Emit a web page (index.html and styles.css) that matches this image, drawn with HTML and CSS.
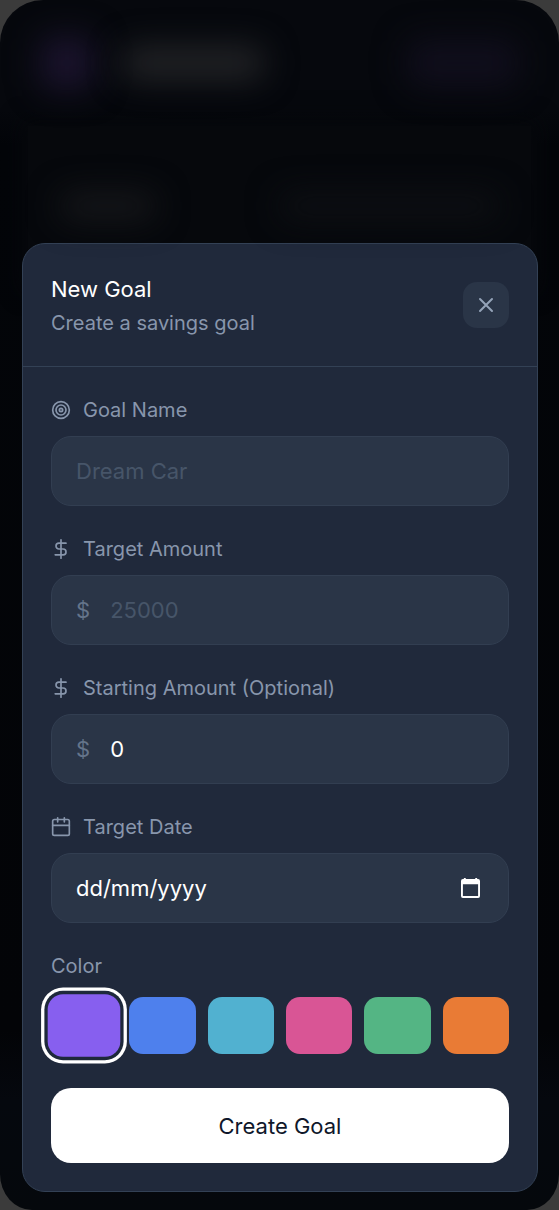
FILE: index.html
```html
<!DOCTYPE html>
<html lang="en-GB">
<head>
  <meta charset="utf-8">
  <meta name="viewport" content="width=device-width, initial-scale=1">
  <title>New Goal</title>
  <link rel="stylesheet" href="styles.css">
</head>
<body>
  <div class="screen">
    <div class="backdrop" aria-hidden="true">
      <div class="backdrop-header">
        <div class="glow glow-logo"></div>
        <div class="glow glow-brand"></div>
        <div class="glow glow-action"></div>
      </div>
      <div class="backdrop-panel">
        <div class="glow glow-heading"></div>
        <div class="glow glow-detail"></div>
      </div>
    </div>

    <main class="overlay">
      <form class="card" role="dialog" aria-labelledby="dialog-title">
        <header class="card-header">
          <div class="heading">
            <h1 class="title" id="dialog-title">New Goal</h1>
            <p class="subtitle">Create a savings goal</p>
          </div>
          <button class="close" type="button" aria-label="Close">
            <svg class="close-icon" viewBox="0 0 24 24"><path d="M18 6 6 18M6 6l12 12"/></svg>
          </button>
        </header>

        <div class="card-body">
          <div class="field">
            <label class="label" for="name">
              <svg class="icon" viewBox="0 0 24 24"><circle cx="12" cy="12" r="10"/><circle cx="12" cy="12" r="6"/><circle cx="12" cy="12" r="2"/></svg>
              Goal Name
            </label>
            <div class="control"><input class="input" id="name" type="text" placeholder="Dream Car"></div>
          </div>

          <div class="field">
            <label class="label" for="target">
              <svg class="icon" viewBox="0 0 24 24"><path d="M12 1v22M18 5H9.500a3.500 3.500 0 0 0 0 7h5a3.500 3.500 0 0 1 0 7H5"/></svg>
              Target Amount
            </label>
            <div class="control"><span class="currency">$</span><input class="input" id="target" type="text" inputmode="decimal" placeholder="25000"></div>
          </div>

          <div class="field">
            <label class="label" for="starting">
              <svg class="icon" viewBox="0 0 24 24"><path d="M12 1v22M18 5H9.500a3.500 3.500 0 0 0 0 7h5a3.500 3.500 0 0 1 0 7H5"/></svg>
              Starting Amount (Optional)
            </label>
            <div class="control"><span class="currency">$</span><input class="input" id="starting" type="text" inputmode="decimal" value="0"></div>
          </div>

          <div class="field">
            <label class="label" for="date">
              <svg class="icon" viewBox="0 0 24 24"><path d="M8 1v5M16 1v5M2 10h20"/><rect x="2" y="3" width="20" height="19" rx="2"/></svg>
              Target Date
            </label>
            <div class="control control-date">
              <input class="input input-date" id="date" type="text" placeholder="dd/mm/yyyy">
              <button class="picker" type="button" aria-label="Open calendar">
                <svg class="picker-icon" viewBox="0 0 20 22"><path fill-rule="evenodd" d="M3 0h2v1h10V0h2v1h1a2 2 0 0 1 2 2v16a2 2 0 0 1-2 2H2a2 2 0 0 1-2-2V3a2 2 0 0 1 2-2h1ZM2 6.500v12.500h16V6.500Z"/></svg>
              </button>
            </div>
          </div>

          <fieldset class="field colors">
            <legend class="label">Color</legend>
            <div class="swatches">
              <input class="swatch violet" type="radio" name="color" aria-label="Violet" checked>
              <input class="swatch blue" type="radio" name="color" aria-label="Blue">
              <input class="swatch cyan" type="radio" name="color" aria-label="Cyan">
              <input class="swatch pink" type="radio" name="color" aria-label="Pink">
              <input class="swatch green" type="radio" name="color" aria-label="Green">
              <input class="swatch orange" type="radio" name="color" aria-label="Orange">
            </div>
          </fieldset>

          <button class="submit" type="submit">Create Goal</button>
        </div>
      </form>
    </main>
  </div>
</body>
</html>
```
FILE: styles.css
```css
* {
  box-sizing: border-box;
}

body {
  margin: 0;
  background: #3b3b3b;
  color: #fff;
  font-family: Inter, "Liberation Sans", sans-serif;
  font-weight: 400;
}

button,
input {
  font: inherit;
  color: inherit;
}

.screen {
  display: grid;
  min-height: 100vh;
  overflow: hidden;
  border-radius: 43px 43px 32px 32px / 43px 43px 36px 36px;
  background: linear-gradient(#06080d 0, #06080d 110px, #030509 145px, #030407 1030px, #05080e 1100px, #05080c 100%);
}

/* Dimmed page behind the dialog */
.backdrop,
.overlay {
  grid-area: 1 / 1;
  min-width: 0;
}

.backdrop {
  display: flex;
  flex-direction: column;
  gap: 36px;
  padding: 36px 28px;
}

.backdrop-header {
  display: flex;
  align-items: center;
  gap: 28px;
  height: 54px;
  padding: 0 12px;
}

.backdrop-panel {
  display: flex;
  align-items: center;
  justify-content: space-between;
  height: 160px;
  padding: 0 32px;
  background: #06080c;
  box-shadow: 0 0 20px 6px #06080c;
}

.glow {
  border-radius: 12px;
  filter: blur(16px);
}

.glow-logo {
  width: 54px;
  height: 54px;
  background: #1a132c;
}

.glow-brand {
  width: 142px;
  height: 34px;
  background: #222326;
}

.glow-action {
  width: 112px;
  height: 48px;
  margin-left: auto;
  background: #100e1c;
}

.glow-heading {
  width: 96px;
  height: 26px;
  background: #17181b;
}

.glow-detail {
  width: 220px;
  height: 26px;
  background: #0e1014;
}

.overlay {
  display: flex;
  align-items: flex-end;
  padding: 18px 21px 18px 22px;
}

.card {
  flex: 1;
  min-width: 0;
  border: 1px solid #334155;
  border-radius: 23px;
  background: #20293b;
}

.card-header {
  display: flex;
  align-items: center;
  justify-content: space-between;
  padding: 28px;
  border-bottom: 1px solid #334155;
}

.heading {
  display: grid;
  gap: 2px;
}

.title,
.subtitle {
  margin: 0;
  font-weight: inherit;
}

.title {
  font-size: 22px;
  line-height: 34px;
}

.subtitle {
  color: #8896ac;
  font-size: 20px;
  line-height: 30px;
}

.close {
  display: grid;
  place-items: center;
  width: 46px;
  height: 46px;
  padding: 0;
  border: 0;
  border-radius: 14px;
  background: #2a3547;
  color: #94a3b8;
}

.icon,
.close-icon {
  fill: none;
  stroke: currentColor;
  stroke-width: 2;
  stroke-linecap: round;
  stroke-linejoin: round;
}

.close-icon {
  width: 24px;
  height: 24px;
}

.card-body {
  display: grid;
  gap: 28px;
  padding: 28px;
}

.field {
  display: grid;
  gap: 11px;
  min-width: 0;
}

.label {
  display: flex;
  align-items: center;
  gap: 12px;
  color: #8896ac;
  font-size: 20px;
  line-height: 30px;
}

.icon {
  width: 20px;
  height: 20px;
}

.control {
  display: flex;
  align-items: center;
  gap: 20px;
  height: 70px;
  padding: 0 24px;
  border: 1px solid #323e51;
  border-radius: 20px;
  background: #2a3547;
  font-size: 22px;
}

.currency {
  color: #64748b;
}

.input {
  flex: 1;
  min-width: 0;
  height: 100%;
  padding: 0;
  border: 0;
  outline: 0;
  background: transparent;
}

.input::placeholder {
  color: #475569;
  opacity: 1;
}

.input-date::placeholder {
  color: #fff;
}

.picker {
  display: grid;
  place-items: center;
  padding: 0 4px;
  border: 0;
  background: none;
}

.picker-icon {
  width: 19px;
  height: 21px;
  fill: #fff;
}

.colors {
  display: block;
  margin: 0;
  padding: 0;
  border: 0;
}

.colors .label {
  padding: 0;
}

.swatches {
  display: grid;
  grid-template-columns: repeat(6, 1fr);
  gap: 12px;
  padding: 16px 0 6px;
}

.swatch {
  appearance: none;
  width: 100%;
  height: 57px;
  margin: 0;
  border-radius: 14px;
}

.swatch:checked {
  transform: scale(1.1);
  box-shadow: 0 0 0 3px #1e293b, 0 0 0 6px #fff;
}

.violet { background: #875fef; }
.blue { background: #4e80ed; }
.cyan { background: #51b1d0; }
.pink { background: #d95595; }
.green { background: #54b584; }
.orange { background: #e97b35; }

.submit {
  height: 75px;
  padding: 0;
  border: 0;
  border-radius: 20px;
  background: #fff;
  color: #0f172a;
  font-size: 22px;
}
```
